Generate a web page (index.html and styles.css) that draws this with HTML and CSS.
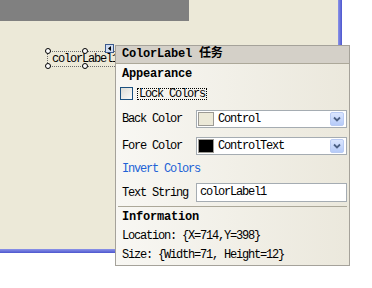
FILE: index.html
```html
<!DOCTYPE html>
<html lang="zh">

<head>
    <meta charset="UTF-8">
    <title>ColorLabel 任务</title>
    <link rel="stylesheet" href="styles.css">
</head>

<body>

    <!-- Designer surface -->
    <div class="frame">
        <div class="surface">
            <div class="form-bar"></div>

            <div class="control">
                colorLabel1
                <i class="handle h-tl"></i>
                <i class="handle h-tm"></i>
                <i class="handle h-bl"></i>
                <i class="handle h-bm"></i>
            </div>

            <button class="smart-tag">
                <svg width="3" height="5" viewBox="0 0 3 5"><polygon points="3,0 3,5 0,2.5" fill="#000"/></svg>
            </button>
        </div>
    </div>

    <!-- Smart tag panel -->
    <div class="tasks">
        <div class="tasks-head">ColorLabel 任务</div>
        <div class="tasks-body">
            <div class="row title">Appearance</div>

            <div class="row check-row">
                <span class="check"></span>
                <span class="focus">Lock Colors</span>
            </div>

            <div class="row prop back-row">
                <span>Back Color</span>
                <div class="combo">
                    <span class="swatch swatch-control"></span>
                    <span class="combo-text">Control</span>
                    <span class="drop">
                        <svg width="8" height="6" viewBox="0 0 8 6"><path d="M1 1.5 L4 4.5 L7 1.5" fill="none" stroke="#4d6185" stroke-width="1.8"/></svg>
                    </span>
                </div>
            </div>

            <div class="row prop fore-row">
                <span>Fore Color</span>
                <div class="combo">
                    <span class="swatch swatch-text"></span>
                    <span class="combo-text">ControlText</span>
                    <span class="drop">
                        <svg width="8" height="6" viewBox="0 0 8 6"><path d="M1 1.5 L4 4.5 L7 1.5" fill="none" stroke="#4d6185" stroke-width="1.8"/></svg>
                    </span>
                </div>
            </div>

            <div class="row link-row"><a class="link">Invert Colors</a></div>

            <div class="row prop text-row">
                <span>Text String</span>
                <div class="textbox">colorLabel1</div>
            </div>

            <div class="sep"></div>

            <div class="row title info-title">Information</div>
            <div class="row loc-row">Location: {X=714,Y=398}</div>
            <div class="row size-row">Size: {Width=71, Height=12}</div>
        </div>
    </div>

</body>

</html>
```

FILE: styles.css
```css
/* Page */
body {
    margin: 0;
    background: #fff;
    font-family: "Liberation Mono", "Noto Sans CJK SC", monospace;
    font-size: 12px;
    color: #000;
}

/* Designer area with blue edge */
.frame {
    width: 342px;
    height: 253px;
    box-sizing: border-box;
    padding: 0 4px 4px 0;
    background:
        linear-gradient(to right, #8c94e8, #4c56ce) right top / 4px 100% no-repeat,
        linear-gradient(#8c94e8, #4c56ce) left bottom / 100% 4px no-repeat;
}

.surface {
    position: relative;
    height: 100%;
    background: #ece9d8;
}

.form-bar {
    width: 189px;
    height: 21px;
    background: #808080;
}

/* Selected control on the canvas */
.control {
    position: absolute;
    left: 47px;
    top: 51px;
    width: 72px;
    height: 16px;
    box-sizing: border-box;
    border: 1px dotted #6b6b6b;
    padding: 1px 0 0 4px;
    line-height: 13px;
    letter-spacing: -1.2px;
    white-space: nowrap;
}

.handle {
    position: absolute;
    width: 6px;
    height: 6px;
    box-sizing: border-box;
    border: 1px solid #000;
    border-radius: 50%;
    background: #fff;
}

.h-tl { left: -3px; top: -4px; }
.h-tm { left: 34px; top: -4px; }
.h-bl { left: -3px; top: 11px; }
.h-bm { left: 34px; top: 11px; }

.smart-tag {
    position: absolute;
    left: 105px;
    top: 44px;
    width: 9px;
    height: 9px;
    box-sizing: border-box;
    padding: 0;
    border: 1px solid #3c5a8c;
    background: #cfdcf2;
    display: flex;
    align-items: center;
    justify-content: center;
}

.smart-tag svg {
    display: block;
}

/* Tasks panel */
.tasks {
    position: absolute;
    left: 115px;
    top: 45px;
    width: 235px;
    height: 221px;
    box-sizing: border-box;
    border: 1px solid #a5a29a;
    background: linear-gradient(to right, #f8f7f3, #ebe8dc);
    letter-spacing: -1.2px;
    white-space: nowrap;
}

.tasks-head {
    height: 17px;
    line-height: 17px;
    padding-left: 6px;
    border-bottom: 1px solid #aca899;
    background: #d4d0c8;
    font-weight: bold;
    letter-spacing: -0.2px;
}

.tasks-body {
    padding: 0 2px 2px;
}

.row {
    display: flex;
    align-items: center;
    padding-left: 4px;
    line-height: 14px;
}

.title {
    height: 19px;
    font-weight: bold;
    letter-spacing: -0.2px;
}

.check-row {
    height: 21px;
    padding-left: 2px;
    gap: 4px;
}

.check {
    width: 13px;
    height: 13px;
    box-sizing: border-box;
    border: 1px solid #1c5180;
    background: linear-gradient(135deg, #dcdcd6, #fbfbf9);
}

.focus {
    border: 1px dotted #000;
    padding: 0 1px;
    line-height: 10px;
}

.prop {
    display: grid;
    grid-template-columns: 74px 151px;
}

.back-row { height: 30px; }
.fore-row { height: 24px; }
.link-row { height: 22px; }
.text-row { height: 25px; }

/* Colour combo boxes */
.combo {
    display: flex;
    align-items: center;
    height: 18px;
    box-sizing: border-box;
    padding-left: 1px;
    border: 1px solid #a5acb2;
    background: #fff;
}

.swatch {
    flex: none;
    width: 16px;
    height: 14px;
    box-sizing: border-box;
    margin-right: 4px;
    border: 1px solid #9c9a94;
}

.swatch-control { background: #ece9d8; }
.swatch-text { background: #000; }

.combo-text {
    flex: 1;
}

.drop {
    flex: none;
    display: flex;
    align-items: center;
    justify-content: center;
    width: 14px;
    height: 14px;
    box-sizing: border-box;
    margin-right: 2px;
    border: 1px solid #b9cbf3;
    border-radius: 2px;
    background: linear-gradient(#dbe6fe, #b6cbf8);
}

.drop svg {
    display: block;
}

.link {
    color: #2162d6;
}

.textbox {
    height: 19px;
    box-sizing: border-box;
    padding-left: 3px;
    border: 1px solid #a5acb2;
    background: #fff;
    line-height: 17px;
}

.sep {
    height: 1px;
    margin-top: 1px;
    background: #aca899;
}

.loc-row { height: 20px; }
.size-row { height: 17px; }
```
